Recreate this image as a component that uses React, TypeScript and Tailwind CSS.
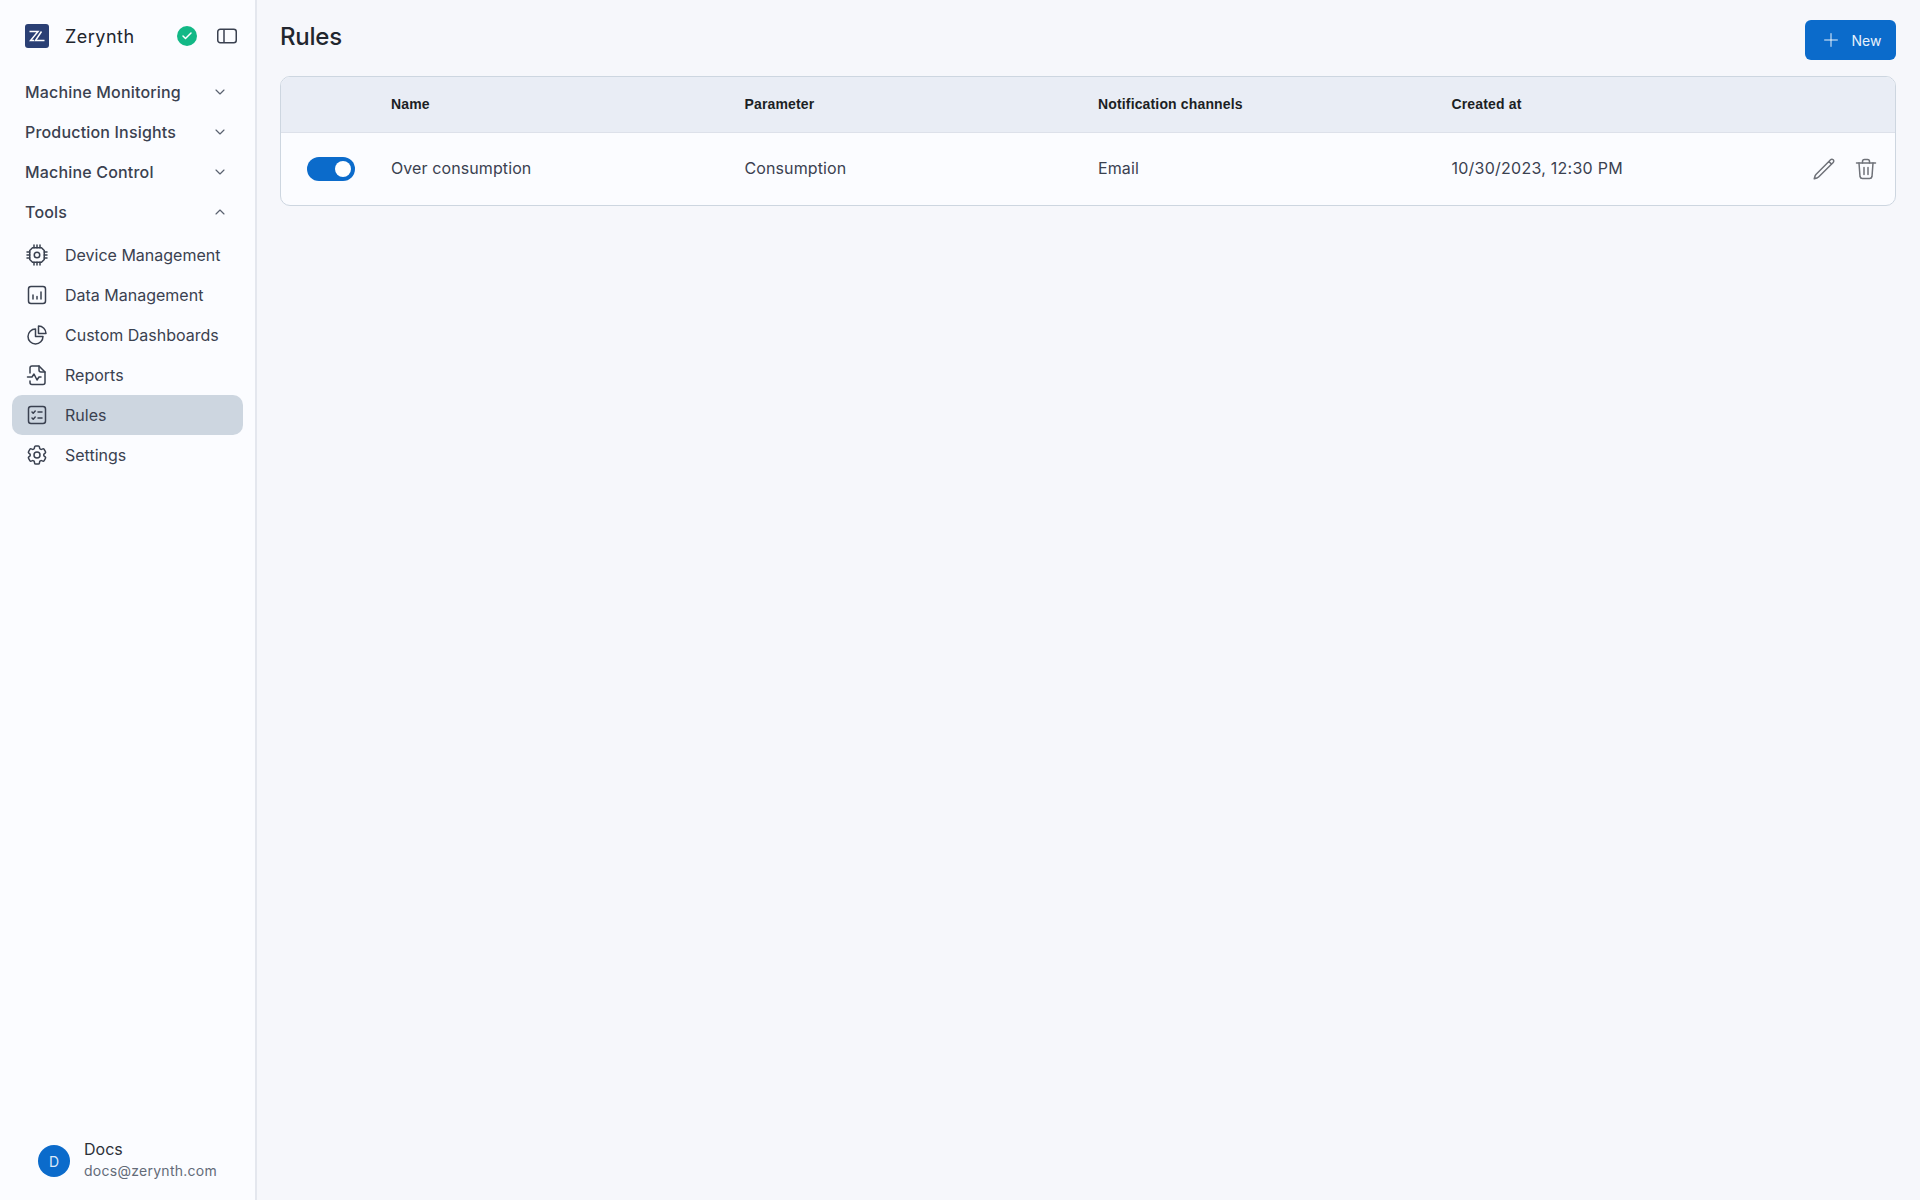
import React from "react";
import { ChevronDown, ChevronUp, Plus, Check } from "lucide-react";
import { HiOutlineChartPie, HiOutlineCog6Tooth, HiOutlinePencil } from "react-icons/hi2";

const CpuIcon = () => (
  <svg width="24" height="24" viewBox="0 0 24 24" fill="none" stroke="currentColor" strokeWidth="1.5" strokeLinecap="round" strokeLinejoin="round">
    <path d="M7.5 4.75h9l2.75 2.75v9l-2.75 2.75h-9L4.75 16.5v-9z" />
    <circle cx="12" cy="12" r="2.75" />
    <path d="M9 2v2.75M12 2v2.75M15 2v2.75M9 19.25V22M12 19.25V22M15 19.25V22M2 9h2.75M2 12h2.75M2 15h2.75M19.25 9H22M19.25 12H22M19.25 15H22" />
  </svg>
);

const DataIcon = () => (
  <svg width="24" height="24" viewBox="0 0 24 24" fill="none" stroke="currentColor" strokeWidth="1.5" strokeLinecap="round" strokeLinejoin="round">
    <rect x="3.5" y="3.5" width="17" height="17" rx="2.5" />
    <path d="M8 16v-4M12 16v-2.5M16 16V9" />
  </svg>
);

const ReportIcon = () => (
  <svg width="24" height="24" viewBox="0 0 24 24" fill="none" stroke="currentColor" strokeWidth="1.5" strokeLinecap="round" strokeLinejoin="round">
    <path d="M5 10V5a2 2 0 0 1 2-2h7l6 6v10.500a2 2 0 0 1-2 2H7a2 2 0 0 1-2-2v-1.500" />
    <path d="M14 3v4a2 2 0 0 0 2 2h4" />
    <path d="M2.500 14H7l2-3 3 6 2-3h2" />
  </svg>
);

const RulesIcon = () => (
  <svg width="24" height="24" viewBox="0 0 24 24" fill="none" stroke="currentColor" strokeWidth="1.5" strokeLinecap="round" strokeLinejoin="round">
    <rect x="3.500" y="3.500" width="17" height="17" rx="2.500" />
    <path d="M7 9l1.200 1.200L10.200 8" />
    <path d="M7 15l1.200 1.200 2-2.200" />
    <path d="M13 9h4" />
    <path d="M13 15h4" />
  </svg>
);

const PanelIcon = () => (
  <svg width="22" height="18" viewBox="0 0 22 18" fill="none" stroke="currentColor" strokeWidth="1.5">
    <rect x="1.750" y="2.250" width="18.500" height="13.500" rx="2.500" />
    <path d="M8 2.250v13.500" />
  </svg>
);

const TrashIcon = () => (
  <svg width="24" height="24" viewBox="0 0 24 24" fill="none" stroke="currentColor" strokeWidth="1.5" strokeLinecap="round" strokeLinejoin="round">
    <path d="M2.500 6h19" />
    <path d="M8.500 6V4.500A2 2 0 0 1 10.500 2.500h3a2 2 0 0 1 2 2V6" />
    <path d="M5 6l1 13.500a2.500 2.500 0 0 0 2.500 2h7a2.500 2.500 0 0 0 2.500-2L19 6" />
    <path d="M10 10.500v7M14 10.500v7" />
  </svg>
);

const Logo = () => (
  <div className="flex h-6 w-6 items-center justify-center rounded-[3px] bg-[#2a3f74]">
    <svg width="16" height="12" viewBox="0 0 16 12" fill="none" stroke="white" strokeWidth="1.500">
      <path d="M0.500 1.500H9L1.500 10.500H5" />
      <path d="M12.500 1.500L6.500 10.500H15.500" />
    </svg>
  </div>
);

const sections = ["Machine Monitoring", "Production Insights", "Machine Control"];

const tools = [
  { name: "Device Management", icon: <CpuIcon /> },
  { name: "Data Management", icon: <DataIcon /> },
  { name: "Custom Dashboards", icon: <HiOutlineChartPie size={24} /> },
  { name: "Reports", icon: <ReportIcon /> },
  { name: "Rules", icon: <RulesIcon />, active: true },
  { name: "Settings", icon: <HiOutlineCog6Tooth size={24} /> },
];

export default function App() {
  return (
    <div className="flex h-[1200px] w-[1920px] bg-[#f6f7fb] font-['Inter',sans-serif] text-[#3a4150]">
      <aside className="flex w-[257px] shrink-0 flex-col border-r-2 border-[#e4e7ee] bg-[#fbfcff]">
        <div className="flex h-[72px] items-center pl-[25px] pr-[17px]">
          <Logo />
          <span className="ml-[16px] flex-1 text-[18px] tracking-[0.5px] text-[#22262e]">Zerynth</span>
          <div className="mr-[19px] flex h-5 w-5 items-center justify-center rounded-full bg-[#12b886]">
            <Check size={12} strokeWidth={3} className="text-white" />
          </div>
          <PanelIcon />
        </div>

        <nav className="flex flex-1 flex-col">
          {sections.map((s) => (
            <div key={s} className="flex h-10 items-center justify-between pl-[25px] pr-[27px] text-[16px] font-medium tracking-[0.18px] text-[#3a4150]">
              {s}
              <ChevronDown size={16} strokeWidth={1.75} className="text-[#5a6270]" />
            </div>
          ))}
          <div className="flex h-10 items-center justify-between pl-[25px] pr-[27px] text-[16px] font-medium tracking-[0.18px] text-[#3a4150]">
            Tools
            <ChevronUp size={16} strokeWidth={1.75} className="text-[#5a6270]" />
          </div>
          <div className="mt-[3px] flex flex-col px-3">
            {tools.map((t) => (
              <div
                key={t.name}
                className={`flex h-10 items-center gap-[16px] rounded-[10px] pl-[13px] text-[16px] ${t.active ? "bg-[#cdd6e0]" : ""}`}
              >
                {t.icon}
                {t.name}
              </div>
            ))}
          </div>
        </nav>

        <div className="flex h-[72px] items-start pl-[38px] pt-[9px]">
          <div className="mt-[8px] flex h-8 w-8 items-center justify-center rounded-full bg-[#0b6bcb] text-[14px] text-[#dbe9f9]">D</div>
          <div className="ml-[14px]">
            <div className="text-[16px] leading-[24px] text-[#2c3038]">Docs</div>
            <div className="text-[14px] leading-[20px] tracking-[0.27px] text-[#636b78]">docs@zerynth.com</div>
          </div>
        </div>
      </aside>

      <main className="flex-1 pl-[23px] pr-6">
        <div className="flex h-[76px] items-start justify-between">
          <h1 className="mt-5 text-[24px] leading-[34px] font-medium tracking-[-0.25px] text-[#22262e]">Rules</h1>
          <button className="mt-5 flex h-10 w-[91px] items-center justify-center gap-[10px] rounded-[6px] bg-[#0b6bcb] text-[14px] text-[#e8f1fb]">
            <Plus size={22} strokeWidth={1} className="text-white" />
            New
          </button>
        </div>

        <div className="overflow-hidden rounded-[10px] border border-[#cdd6e0] bg-[#fbfcff]">
          <div className="flex h-[56px] items-center border-b border-[#dde1ea] bg-[#e9edf5] font-['Liberation_Sans',sans-serif] text-[14px] font-bold tracking-[0.15px] text-[#1c1f24]">
            <div className="w-[110px]" />
            <div className="w-[353.5px]">Name</div>
            <div className="w-[353.5px]">Parameter</div>
            <div className="w-[353.5px]">Notification channels</div>
            <div>Created at</div>
          </div>
          <div className="flex h-[72px] items-center text-[16px] tracking-[0.1px] text-[#3a4150]">
            <div className="w-[110px] pl-[26px]">
              <div className="flex h-6 w-12 items-center justify-end rounded-full bg-[#0b6bcb] pr-1">
                <div className="h-4 w-4 rounded-full bg-white" />
              </div>
            </div>
            <div className="w-[353.5px] pb-[2px]">Over consumption</div>
            <div className="w-[353.5px] pb-[2px]">Consumption</div>
            <div className="w-[353.5px] pb-[2px]">Email</div>
            <div className="flex-1 pb-[2px] tracking-[0.25px]">10/30/2023, 12:30 PM</div>
            <div className="flex items-center gap-[18px] pr-[17px] text-[#6f7279]">
              <HiOutlinePencil size={24} />
              <TrashIcon />
            </div>
          </div>
        </div>
      </main>
    </div>
  );
}
